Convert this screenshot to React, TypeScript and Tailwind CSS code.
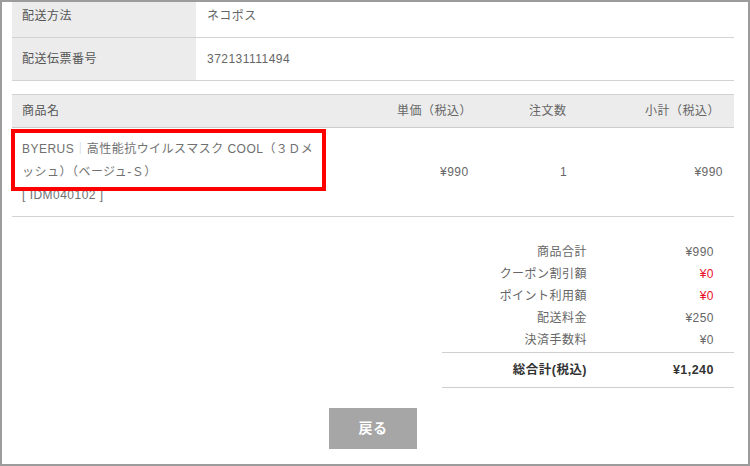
import React from 'react';

const font = { fontFamily: '"Liberation Sans", "Noto Sans CJK JP", sans-serif' };

const InfoRow: React.FC<{ label: string; value: string }> = ({ label, value }) => (
  <div className="flex h-[43px] border-b border-[#d2d2d2]">
    <div className="w-[184px] bg-[#ececec] pl-[10px] flex items-center text-[#555]">{label}</div>
    <div className="flex-1 pl-[11px] flex items-center text-[#666]">{value}</div>
  </div>
);

const SummaryRow: React.FC<{ label: string; value: string; red?: boolean }> = ({ label, value, red }) => (
  <div className="flex h-[22px] items-center">
    <div className="w-[145px] text-right text-[#666]">{label}</div>
    <div className={`flex-1 text-right pr-[20px] ${red ? 'text-[#e8102a]' : 'text-[#666]'}`}>{value}</div>
  </div>
);

export default function App() {
  return (
    <div
      className="relative w-[750px] h-[466px] box-border border-2 border-[#9c9c9c] bg-white overflow-hidden text-[12px] tracking-[0.04em]"
      style={font}
    >
      <div className="mx-[10px] w-[722px] -mt-[7px]">
        {/* Shipping info */}
        <InfoRow label="配送方法" value="ネコポス" />
        <InfoRow label="配送伝票番号" value="372131111494" />

        {/* Items table */}
        <div className="mt-[13px] border-t border-[#d2d2d2]">
          <div className="flex h-[33px] items-center bg-[#ececec] border-b border-[#cdcdcd] text-[#666]">
            <div className="w-[368px] pl-[10px] text-[#555]">商品名</div>
            <div className="w-[120px] pl-[17px]">単価（税込）</div>
            <div className="w-[110px] pl-[29px]">注文数</div>
            <div className="flex-1 text-right pr-[14px]">小計（税込）</div>
          </div>
          <div className="flex h-[89px] border-b border-[#d2d2d2] text-[#666]">
            <div className="w-[368px] pl-[10px] pt-[10px] leading-[23px] text-[#707070]">
              BYERUS<span className="text-[#ccc]">｜</span>高性能抗ウイルスマスク COOL（３Ｄメ
              <br />
              ッシュ）（ベージュ-Ｓ）
              <br />[ IDM040102 ]
            </div>
            <div className="w-[120px] pl-[60px] flex items-center">¥990</div>
            <div className="w-[110px] pl-[60px] flex items-center">1</div>
            <div className="flex-1 text-right pr-[11px] flex items-center justify-end">¥990</div>
          </div>
        </div>

        {/* Summary */}
        <div className="ml-auto w-[292px] pt-[24px]">
          <div className="border-b border-[#cfcfcf] pb-px">
            <SummaryRow label="商品合計" value="¥990" />
            <SummaryRow label="クーポン割引額" value="¥0" red />
            <SummaryRow label="ポイント利用額" value="¥0" red />
            <SummaryRow label="配送料金" value="¥250" />
            <SummaryRow label="決済手数料" value="¥0" />
          </div>
          <div className="flex h-[35px] items-center border-b border-[#cfcfcf] font-bold text-[#333] text-[12.5px]">
            <div className="w-[145px] text-right">総合計(税込)</div>
            <div className="flex-1 text-right pr-[20px]">¥1,240</div>
          </div>
        </div>

        {/* Back button */}
        <div className="flex justify-center mt-[20px]">
          <button className="w-[88px] h-[41px] bg-[#a6a6a6] text-white font-bold text-[14px]">戻る</button>
        </div>
      </div>

      {/* Highlight overlay */}
      <div className="absolute left-[9px] top-[127px] w-[315px] h-[62px] border-4 border-[#ff0000]" />
    </div>
  );
}
